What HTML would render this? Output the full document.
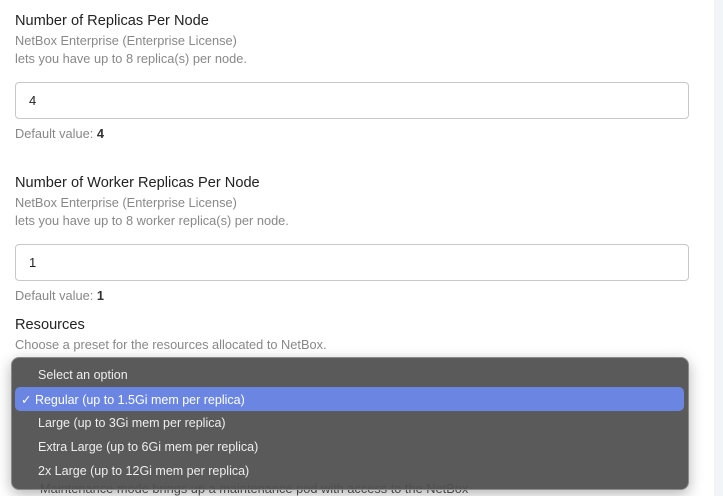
<!DOCTYPE html><html><head><style>
body{margin:0;width:723px;height:496px;overflow:hidden;background:#fff;font-family:"Liberation Sans",sans-serif;position:relative}
.strip{position:absolute;left:714px;top:0;width:9px;height:496px;background:#f2f5f7}
.t{position:absolute;left:15px;font-size:14.6px;color:#222;white-space:nowrap}
.s{position:absolute;left:15px;font-size:12.8px;color:#888;white-space:nowrap}
.in{position:absolute;left:15px;width:674px;height:37px;border:1px solid #c8c8c8;border-radius:4px;box-sizing:border-box;font-size:13px;color:#222;padding:10px 0 0 13px}
.dd{position:absolute;left:11px;top:357px;width:678px;height:133px;background:rgba(78,78,78,.93);border:1px solid #8a8a8a;border-radius:8px;box-sizing:border-box;box-shadow:0 4px 14px rgba(0,0,0,.3)}
.o{position:absolute;left:26px;font-size:12.5px;color:#eee;white-space:nowrap}
.sel{position:absolute;left:3px;top:29px;width:669px;height:24px;background:#6a86e2;border-radius:5px}
</style></head><body>
<div class="strip"></div>
<div class="t" style="top:13px">Number of Replicas Per Node</div>
<div class="s" style="top:33px">NetBox Enterprise (Enterprise License)</div>
<div class="s" style="top:51px">lets you have up to 8 replica(s) per node.</div>
<div class="in" style="top:82px">4</div>
<div class="s" style="top:126px">Default value: <b style="color:#333">4</b></div>
<div class="t" style="top:175px">Number of Worker Replicas Per Node</div>
<div class="s" style="top:195px">NetBox Enterprise (Enterprise License)</div>
<div class="s" style="top:213px">lets you have up to 8 worker replica(s) per node.</div>
<div class="in" style="top:244px">1</div>
<div class="s" style="top:288px">Default value: <b style="color:#333">1</b></div>
<div class="t" style="top:317px">Resources</div>
<div class="s" style="top:337px">Choose a preset for the resources allocated to NetBox.</div>
<div class="s" style="top:481px;left:40px;color:#555">Maintenance mode brings up a maintenance pod with access to the NetBox</div>
<div class="dd">
<div class="sel"></div>
<div class="o" style="top:10px">Select an option</div>
<div class="o" style="top:34px;left:9px;color:#fff">✓ Regular (up to 1.5Gi mem per replica)</div>
<div class="o" style="top:58px">Large (up to 3Gi mem per replica)</div>
<div class="o" style="top:82px">Extra Large (up to 6Gi mem per replica)</div>
<div class="o" style="top:106px">2x Large (up to 12Gi mem per replica)</div>
</div>
</body></html>
